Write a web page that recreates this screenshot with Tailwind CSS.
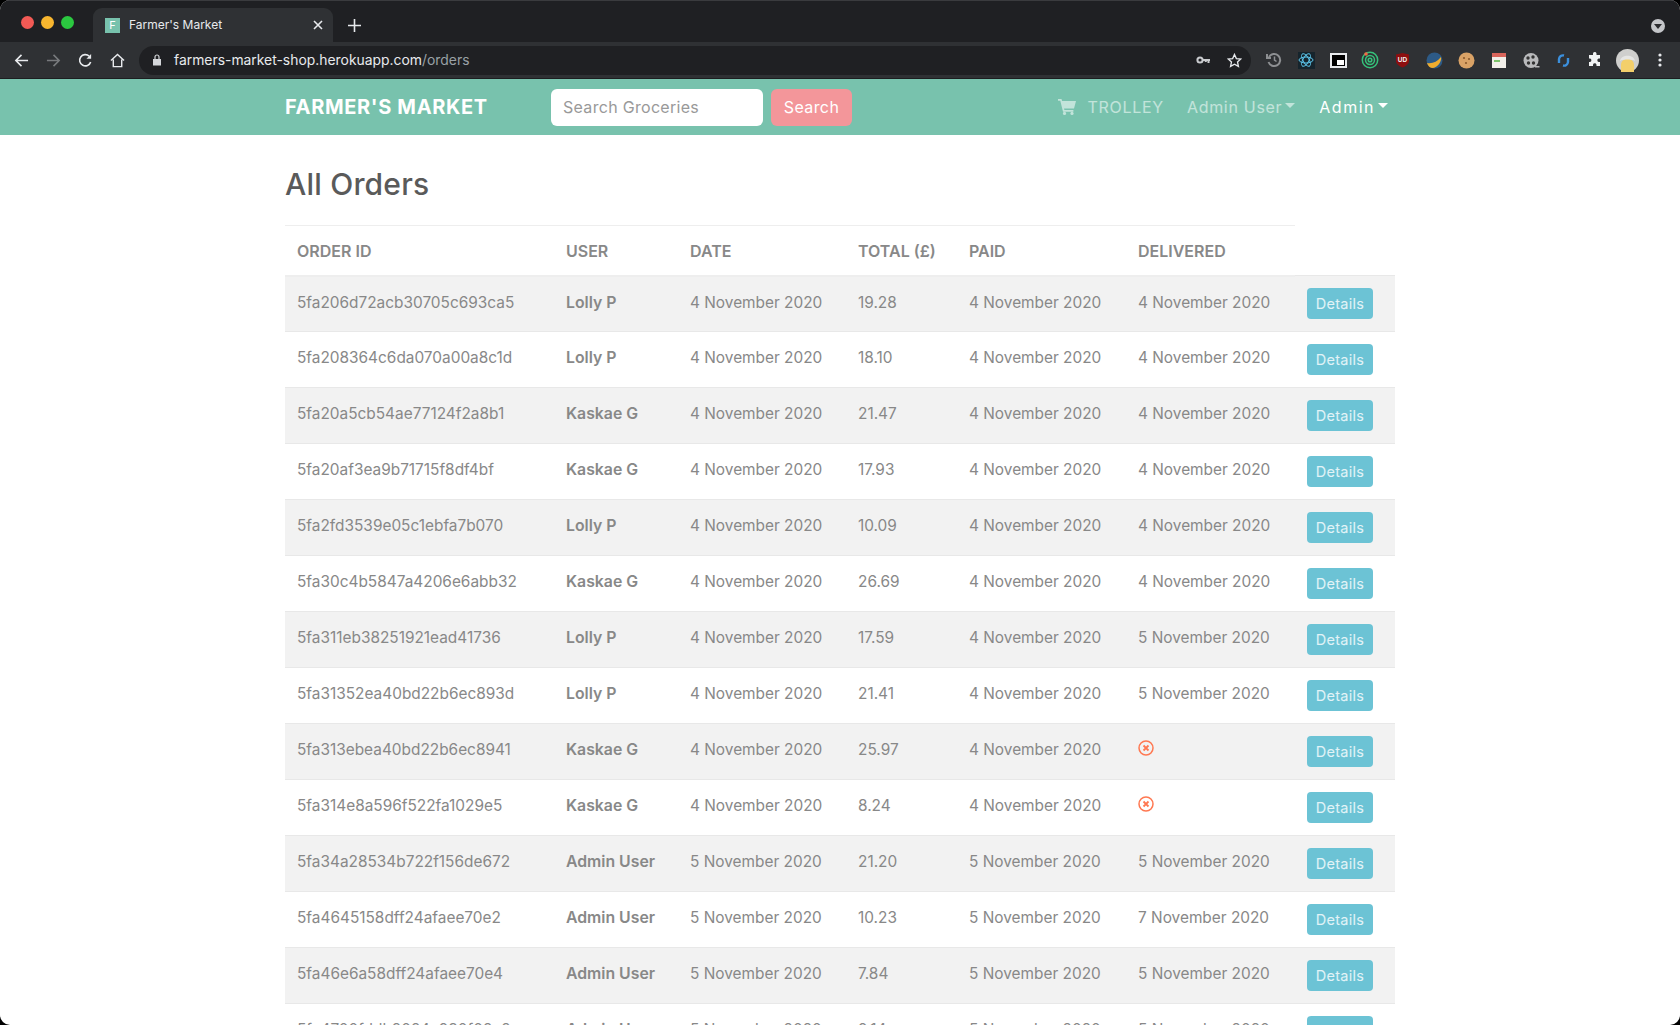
<!DOCTYPE html>
<html lang="en">

<head>
    <meta charset="UTF-8">
    <meta name="viewport" content="width=device-width, initial-scale=1.0">
    <title>Farmer's Market</title>
    <script src="https://cdn.jsdelivr.net/npm/@tailwindcss/browser@4"></script>
</head>

<body class="bg-black">
    <div class="h-[1025px] w-[1680px] overflow-hidden rounded-[10px] bg-white font-['Inter',sans-serif]">

        <!-- tab strip -->
        <div class="flex h-[42px] items-end border-t border-[#3a3b3e] bg-[#1f2023]">
            <div class="mt-[1px] flex h-[18px] w-[93px] items-center gap-[7px] self-center pl-[21px]">
                <span class="h-[13px] w-[13px] rounded-full bg-[#f25a55]"></span>
                <span class="h-[13px] w-[13px] rounded-full bg-[#f8b62f]"></span>
                <span class="h-[13px] w-[13px] rounded-full bg-[#2bc840]"></span>
            </div>
            <div class="flex h-[34px] w-[240px] items-center rounded-t-[9px] bg-[#2f3134] pl-[12px] pr-[10px]">
                <span class="flex h-[15px] w-[15px] items-center justify-center bg-[#78c2ad] text-[11px] text-white">F</span>
                <span class="ml-[9px] text-[12px] text-[#e8eaed]">Farmer's Market</span>
                <svg class="ml-auto h-[10px] w-[10px]" viewBox="0 0 10 10" stroke="#e8eaed" stroke-width="1.6"><path d="M1 1l8 8M9 1l-8 8"/></svg>
            </div>
            <svg class="mb-[10px] ml-[15px] h-[13px] w-[13px]" viewBox="0 0 13 13" stroke="#e8eaed" stroke-width="1.6"><path d="M6.500 0v13M0 6.500h13"/></svg>
            <span class="mb-[9px] ml-auto mr-[15px] flex h-[14px] w-[14px] items-center justify-center rounded-full bg-[#c4c6c9]">
                <span class="h-0 w-0 border-x-[4px] border-t-[5px] border-x-transparent border-t-[#2a2b2e]"></span>
            </span>
        </div>

        <!-- toolbar -->
        <div class="flex h-[37px] items-center border-b border-[#1d1e20] bg-[#2f3134]">
            <svg class="ml-[14px] h-[15px] w-[15px]" viewBox="0 0 16 16" fill="none" stroke="#e8eaed" stroke-width="1.7"><path d="M15 8H2M8 2L2 8l6 6"/></svg>
            <svg class="ml-[17px] h-[15px] w-[15px]" viewBox="0 0 16 16" fill="none" stroke="#77797c" stroke-width="1.7"><path d="M1 8h13M8 2l6 6-6 6"/></svg>
            <svg class="ml-[17px] h-[15px] w-[15px]" viewBox="0 0 16 16" fill="none" stroke="#e8eaed" stroke-width="1.7"><path d="M13.500 9.500A6 6 0 1 1 12 3.500"/><path d="M14 1v5H9" fill="#e8eaed" stroke="none"/></svg>
            <svg class="ml-[17px] h-[15px] w-[15px]" viewBox="0 0 16 16" fill="none" stroke="#e8eaed" stroke-width="1.5"><path d="M1 8l7-6.500L15 8M3.500 7v7.500h9V7"/></svg>
            <div class="ml-[14px] flex h-[29px] w-[1112px] items-center rounded-full bg-[#1f2023] pl-[13px] pr-[9px]">
                <svg class="h-[12px] w-[10px]" viewBox="0 0 10 12"><path d="M1 5h8v6.500H1z" fill="#d5d7da"/><path d="M3 5V3a2 2 0 0 1 4 0v2" fill="none" stroke="#d5d7da" stroke-width="1.2"/></svg>
                <span class="ml-[12px] text-[13.9px] text-[#e8eaed]">farmers-market-shop.herokuapp.com<span class="text-[#9aa0a6]">/orders</span></span>
                <svg class="ml-auto h-[10px] w-[15px]" viewBox="0 0 15 10" fill="none" stroke="#c9cbce" stroke-width="2"><circle cx="4" cy="5" r="2.600"/><path d="M7 5h7M12.500 5v3M9.800 5v2"/></svg>
                <svg class="ml-[16px] h-[15px] w-[15px]" viewBox="0 0 16 16" fill="none" stroke="#e8eaed" stroke-width="1.4"><path d="M8 1.500l2 4.400 4.700.5-3.500 3.200 1 4.700L8 11.900l-4.200 2.400 1-4.700L1.300 6.400l4.700-.5z"/></svg>
            </div>
            <!-- extensions, one slot each -->
            <div class="ml-[7px] flex items-center">
                <span class="flex w-[32.14px] justify-center">
                    <svg class="h-[16px] w-[16px]" viewBox="0 0 16 16" fill="none" stroke="#8d8f92" stroke-width="2"><path d="M3 5a6 6 0 1 1-.5 5M1 2v4h4"/><path d="M8.500 4.500V8l2 1.500" stroke-width="1.500"/></svg>
                </span>
                <span class="flex w-[32.14px] justify-center">
                    <span class="flex h-[17px] w-[17px] items-center justify-center bg-[#16242c]">
                        <svg class="h-[16px] w-[16px]" viewBox="0 0 16 16" fill="none" stroke="#5cc3e8" stroke-width="1"><ellipse cx="8" cy="8" rx="7" ry="3"/><ellipse cx="8" cy="8" rx="7" ry="3" transform="rotate(60 8 8)"/><ellipse cx="8" cy="8" rx="7" ry="3" transform="rotate(120 8 8)"/></svg>
                    </span>
                </span>
                <span class="flex w-[32.14px] justify-center">
                    <span class="flex h-[15px] w-[17px] items-end justify-end border-2 border-[#e8eaed] bg-black p-[1px]"><span class="h-[5px] w-[7px] bg-white"></span></span>
                </span>
                <span class="flex w-[32.14px] justify-center">
                    <svg class="h-[18px] w-[18px]" viewBox="0 0 18 18" fill="none" stroke="#35c17a" stroke-width="1.500"><circle cx="9" cy="9" r="7.700"/><circle cx="9" cy="9" r="4.500"/><circle cx="9" cy="9" r="1.800"/><circle cx="5" cy="3" r="1.800" fill="#ef6c45" stroke="none"/></svg>
                </span>
                <span class="flex w-[32.14px] justify-center">
                    <svg class="h-[16px] w-[15px]" viewBox="0 0 15 16"><path d="M1 2.500L7.500 1 14 2.500v6.500c0 3-3.500 5.500-6.500 6.500C4.500 14.500 1 12 1 9z" fill="#8d0f10"/><text x="7.500" y="9.500" text-anchor="middle" font-size="6.500" font-weight="700" fill="#f2f2f2" font-family="Liberation Sans">UD</text></svg>
                </span>
                <span class="flex w-[32.14px] justify-center">
                    <svg class="h-[17px] w-[17px]" viewBox="0 0 17 17"><circle cx="8.500" cy="8.500" r="8" fill="#2d5a86"/><path d="M1 11c5 1 10-1 14-6 1 4-3 10-8 11-3 0-5-2-6-5z" fill="#f0ad2e"/></svg>
                </span>
                <span class="flex w-[32.14px] justify-center">
                    <svg class="h-[17px] w-[17px]" viewBox="0 0 17 17"><circle cx="8.500" cy="8.500" r="8" fill="#d9a266"/><circle cx="6" cy="6" r="1.100" fill="#8a5a2c"/><circle cx="11" cy="7" r="1.100" fill="#8a5a2c"/><circle cx="8" cy="11" r="1.100" fill="#8a5a2c"/></svg>
                </span>
                <span class="flex w-[32.14px] justify-center">
                    <span class="flex h-[15px] w-[14px] flex-col bg-[#f2efe9]"><span class="h-[4px] bg-[#d9655b]"></span><span class="ml-[2px] mt-[3px] h-[2px] w-[6px] bg-[#7cc36a]"></span></span>
                </span>
                <span class="flex w-[32.14px] justify-center">
                    <svg class="h-[17px] w-[17px]" viewBox="0 0 17 17"><circle cx="8" cy="8.500" r="7.500" fill="#b9babc"/><circle cx="5" cy="6" r="1.700" fill="#333"/><circle cx="10" cy="5" r="1.700" fill="#333"/><circle cx="5.500" cy="11" r="1.700" fill="#333"/><circle cx="10.500" cy="11" r="1.700" fill="#333"/><path d="M12 14h4.500v1.500H12z" fill="#b9babc"/></svg>
                </span>
                <span class="flex w-[32.14px] justify-center">
                    <svg class="h-[15px] w-[13px]" viewBox="0 0 13 15" fill="none" stroke="#3b8fdc" stroke-width="2.400"><path d="M2 10V6a4 4 0 0 1 5-3.500M11 5v4a4 4 0 0 1-5 3.500"/></svg>
                </span>
                <span class="flex w-[32.14px] justify-center">
                    <svg class="h-[16px] w-[16px]" viewBox="0 0 16 16" fill="#f1f3f4"><path d="M6 1.500a1.800 1.800 0 0 1 3.500 0V3H13v3.500h-1.300a1.800 1.800 0 0 0 0 3.500H13v4H9.500v-1.300a1.800 1.800 0 0 0-3.500 0V14H2v-4h1a1.800 1.800 0 0 0 0-3.500H2V3h4z"/></svg>
                </span>
                <span class="flex w-[32.14px] justify-center">
                    <svg class="h-[23px] w-[23px]" viewBox="0 0 23 23"><circle cx="11.500" cy="11.500" r="11.500" fill="#cfcfcd"/><path d="M5 23v-7c0-4 3-6 6.500-6s6.500 2 6.500 6v7z" fill="#f3cf6b"/><path d="M4 12c1-7 14-7 15 0-3-2-12-2-15 0z" fill="#e6e6e4"/></svg>
                </span>
                <span class="flex w-[32.14px] justify-center">
                    <svg class="h-[14px] w-[4px]" viewBox="0 0 4 14" fill="#e8eaed"><circle cx="2" cy="2" r="1.600"/><circle cx="2" cy="7" r="1.600"/><circle cx="2" cy="12" r="1.600"/></svg>
                </span>
            </div>
        </div>

        <!-- navbar -->
        <nav class="flex h-[56px] items-center bg-[#78c2ad] pl-[285px] pr-[292px]">
            <a class="w-[266px] text-[20px] font-bold tracking-[0.65px] text-white">FARMER'S MARKET</a>
            <div class="flex h-[37px] w-[212px] items-center rounded-[6px] bg-white pl-[12px] text-[16px] tracking-[0.3px] text-[#999]">Search Groceries</div>
            <button class="ml-[8px] h-[37px] w-[81px] rounded-[6px] bg-[#f3969a] text-[16px] tracking-[0.4px] text-white">Search</button>
            <div class="ml-auto flex items-center text-[16px] tracking-[0.7px] text-white/55">
                <svg class="h-[16px] w-[18px]" viewBox="0 0 18 16" fill="currentColor"><path d="M0 0h3.500l.6 2H18l-2 7.500H6l.4 1.500h9v1.700H5L2.300 1.700H0z"/><circle cx="6.500" cy="14.400" r="1.600"/><circle cx="14" cy="14.400" r="1.600"/></svg>
                <span class="ml-[12px]">TROLLEY</span>
                <span class="ml-[23px] flex items-center">Admin User<span class="ml-[3px] mt-[-3px] h-0 w-0 border-x-[5px] border-t-[5px] border-x-transparent border-t-current"></span></span>
                <span class="ml-[24px] flex items-center tracking-[1.5px] text-white">Admin<span class="ml-[3px] mt-[-3px] h-0 w-0 border-x-[5px] border-t-[5px] border-x-transparent border-t-current"></span></span>
            </div>
        </nav>

        <!-- orders -->
        <main class="pl-[285px]">
            <h1 class="pt-[31px] text-[30px] leading-[36px] font-medium tracking-[0.2px] text-[#5a5a5a]">All Orders</h1>
            <table class="mt-[23px] w-[1110px] table-fixed border-collapse text-[15.4px] text-[#888]">
                <thead>
                    <tr class="h-[50px] text-left text-[16px]">
                        <th class="w-[269px] border-t border-b-2 border-[#eeeeee] pl-[12px] pt-[2px] font-semibold">ORDER ID</th>
                        <th class="w-[124px] border-t border-b-2 border-[#eeeeee] pl-[12px] pt-[2px] font-semibold">USER</th>
                        <th class="w-[168px] border-t border-b-2 border-[#eeeeee] pl-[12px] pt-[2px] font-semibold">DATE</th>
                        <th class="w-[111px] border-t border-b-2 border-[#eeeeee] pl-[12px] pt-[2px] font-semibold">TOTAL (£)</th>
                        <th class="w-[169px] border-t border-b-2 border-[#eeeeee] pl-[12px] pt-[2px] font-semibold">PAID</th>
                        <th class="w-[169px] border-t border-b-2 border-[#eeeeee] pl-[12px] pt-[2px] font-semibold">DELIVERED</th>
                        <th class="w-[100px]"></th>
                    </tr>
                </thead>
                <tbody id="orders"></tbody>
            </table>
        </main>
    </div>

    <script>
        const orders = [
            ["5fa206d72acb30705c693ca5", "Lolly P", "4 November 2020", "19.28", "4 November 2020", "4 November 2020"],
            ["5fa208364c6da070a00a8c1d", "Lolly P", "4 November 2020", "18.10", "4 November 2020", "4 November 2020"],
            ["5fa20a5cb54ae77124f2a8b1", "Kaskae G", "4 November 2020", "21.47", "4 November 2020", "4 November 2020"],
            ["5fa20af3ea9b71715f8df4bf", "Kaskae G", "4 November 2020", "17.93", "4 November 2020", "4 November 2020"],
            ["5fa2fd3539e05c1ebfa7b070", "Lolly P", "4 November 2020", "10.09", "4 November 2020", "4 November 2020"],
            ["5fa30c4b5847a4206e6abb32", "Kaskae G", "4 November 2020", "26.69", "4 November 2020", "4 November 2020"],
            ["5fa311eb38251921ead41736", "Lolly P", "4 November 2020", "17.59", "4 November 2020", "5 November 2020"],
            ["5fa31352ea40bd22b6ec893d", "Lolly P", "4 November 2020", "21.41", "4 November 2020", "5 November 2020"],
            ["5fa313ebea40bd22b6ec8941", "Kaskae G", "4 November 2020", "25.97", "4 November 2020", null],
            ["5fa314e8a596f522fa1029e5", "Kaskae G", "4 November 2020", "8.24", "4 November 2020", null],
            ["5fa34a28534b722f156de672", "Admin User", "5 November 2020", "21.20", "5 November 2020", "5 November 2020"],
            ["5fa4645158dff24afaee70e2", "Admin User", "5 November 2020", "10.23", "5 November 2020", "7 November 2020"],
            ["5fa46e6a58dff24afaee70e4", "Admin User", "5 November 2020", "7.84", "5 November 2020", "5 November 2020"],
            ["5fa4700fddb2024c980f02c2", "Admin User", "5 November 2020", "9.14", "5 November 2020", "5 November 2020"],
        ];
        const notDelivered = `<svg class="mt-[2px] h-[16px] w-[16px]" viewBox="0 0 16 16" fill="none" stroke="#ff7851" stroke-width="1.500"><circle cx="8" cy="8" r="7"/><path d="M5.500 5.500l5 5M10.500 5.500l-5 5" stroke-width="1.800"/></svg>`;
        let html = "";
        orders.forEach((o, i) => {
            html += `
                <tr class="h-[56px] border-t border-[#e8e8e8] align-top ${i % 2 == 0 ? "bg-[#f2f2f2]" : ""}">
                    <td class="pl-[12px] pt-[14px]">${o[0]}</td>
                    <td class="pl-[12px] pt-[14px] text-[15.8px] font-semibold">${o[1]}</td>
                    <td class="pl-[12px] pt-[14px]">${o[2]}</td>
                    <td class="pl-[12px] pt-[14px]">${o[3]}</td>
                    <td class="pl-[12px] pt-[14px]">${o[4]}</td>
                    <td class="pl-[12px] pt-[14px]">${o[5] || notDelivered}</td>
                    <td class="pl-[12px] pt-[12px]"><button class="h-[31px] w-[66px] rounded-[4px] bg-[#6cc3d5] text-[14.5px] tracking-[0.3px] text-white/80">Details</button></td>
                </tr>`;
        });
        document.getElementById("orders").innerHTML = html;
    </script>
</body>

</html>
